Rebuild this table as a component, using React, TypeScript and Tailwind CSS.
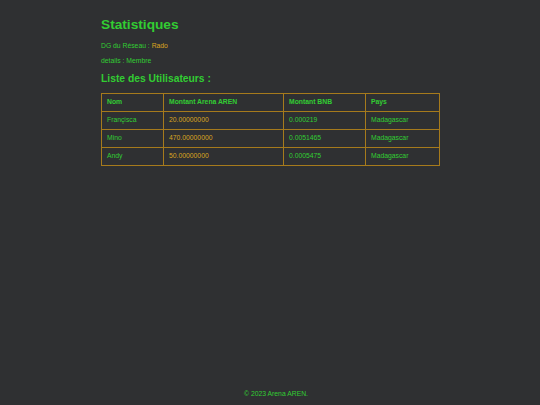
export default function App() {
  const rows = [
    ["Françisca", "20.00000000", "0.000219", "Madagascar"],
    ["Mino", "470.00000000", "0.0051465", "Madagascar"],
    ["Andy", "50.00000000", "0.0005475", "Madagascar"],
  ];
  const cell = "border-[1.5px] border-[#a67a1c] px-[5px] h-[18px] align-middle";
  return (
    <div
      className="min-h-[405px] w-full bg-[#2f3032] flex flex-col text-[6.8px] text-[#32cd32]"
      style={{ fontFamily: '"Liberation Sans", Arial, sans-serif' }}
    >
      <main className="w-[338px] mx-auto flex-1">
        <h1 className="text-[13.7px] font-bold mt-[15px] leading-[20px]">Statistiques</h1>
        <p className="mt-[6px] leading-[10px]">
          DG du Réseau : <span className="text-[#daa520]">Rado</span>
        </p>
        <p className="mt-[5px] leading-[10px]">details : Membre</p>
        <h2 className="text-[10.3px] font-bold mt-[6px] leading-[14px]">Liste des Utilisateurs :</h2>
        <table className="mt-[7px] w-[338px] table-fixed border-collapse border-[1.5px] border-[#a67a1c]">
          <colgroup>
            <col className="w-[62px]" />
            <col className="w-[120px]" />
            <col className="w-[82px]" />
            <col className="w-[74px]" />
          </colgroup>
          <thead>
            <tr>
              <th className={cell + " text-left font-bold"}>Nom</th>
              <th className={cell + " text-left font-bold"}>Montant Arena AREN</th>
              <th className={cell + " text-left font-bold"}>Montant BNB</th>
              <th className={cell + " text-left font-bold"}>Pays</th>
            </tr>
          </thead>
          <tbody>
            {rows.map((r) => (
              <tr key={r[0]}>
                <td className={cell}>{r[0]}</td>
                <td className={cell + " text-[#daa520]"}>{r[1]}</td>
                <td className={cell}>{r[2]}</td>
                <td className={cell}>{r[3]}</td>
              </tr>
            ))}
          </tbody>
        </table>
      </main>
      <footer className="text-center pl-[12px] pb-[6px] leading-[10px]">© 2023 Arena AREN.</footer>
    </div>
  );
}
